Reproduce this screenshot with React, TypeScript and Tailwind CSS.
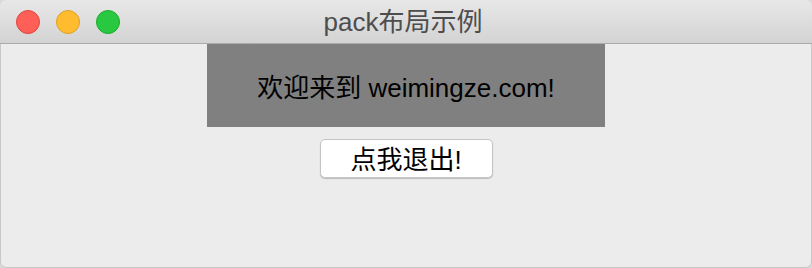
export default function App() {
  const font = { fontFamily: '"Liberation Sans", "Noto Sans CJK SC", sans-serif' };
  return (
    <div className="w-[812px] h-[268px] bg-[#d9d9d9]" style={font}>
      <div className="w-full h-full flex flex-col rounded-[6px] overflow-hidden bg-[#ececec] shadow-[inset_0_0_0_1px_#c8c8c8]">
        <div className="relative h-[44px] shrink-0 flex items-center justify-center bg-gradient-to-b from-[#e8e8e8] to-[#d3d3d3] border-b border-[#a9a9a9]">
          <div className="absolute left-[16px] top-[10px] flex gap-[16px]">
            <span className="w-[24px] h-[24px] rounded-full bg-[#fe5f57] border border-[#e0443e]" />
            <span className="w-[24px] h-[24px] rounded-full bg-[#febc2e] border border-[#dea123]" />
            <span className="w-[24px] h-[24px] rounded-full bg-[#28c840] border border-[#1aab29]" />
          </div>
          <span className="text-[26px] text-[#4d4d4d] leading-none -ml-[6px]">pack布局示例</span>
        </div>
        <div className="flex flex-col items-center">
          <div className="w-[398px] h-[83px] bg-[#808080] flex items-center justify-center pt-[4px] text-[26px] text-black leading-none">
            欢迎来到 weimingze.com!
          </div>
          <button className="mt-[12px] w-[173px] h-[39px] bg-white rounded-[5px] border border-[#c4c4c4] shadow-[0_1px_1px_rgba(0,0,0,0.2)] text-[26px] text-black flex items-center justify-center pt-[2px] leading-none">
            点我退出!
          </button>
        </div>
      </div>
    </div>
  );
}
